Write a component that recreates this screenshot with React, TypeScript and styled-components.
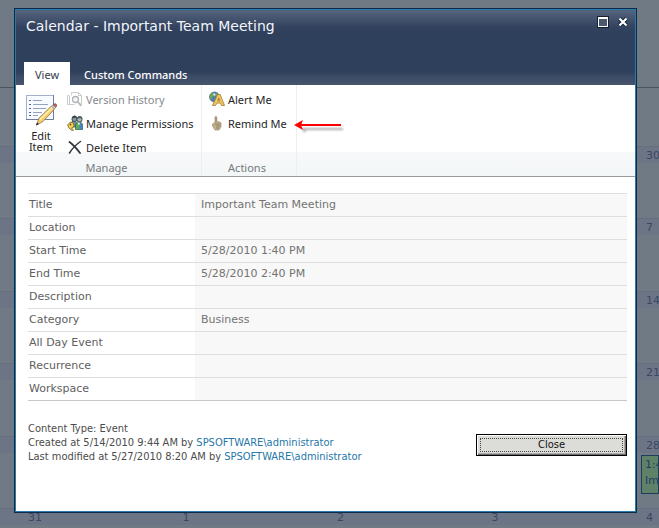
import React from "react";
import styled, { createGlobalStyle } from "styled-components";

const Global = createGlobalStyle`
  * { box-sizing: border-box; }
  body { margin: 0; background: #6e7787; }
  button { font: inherit; color: inherit; border: 0; padding: 0; background: none; cursor: pointer; }
`;

const Page = styled.div`
  position: relative;
  height: 100vh;
  overflow: hidden;
  background: #6f7a84;
  font-family: Verdana, "DejaVu Sans", sans-serif;
`;

const PageHeader = styled.div`
  height: 88px;
  border-bottom: 1px solid #46585a;
`;

const FirstWeek = styled.div`
  height: 58px;
`;

const Week = styled.div<{ $tall?: boolean }>`
  display: grid;
  grid-template-columns: 22px repeat(4, 1fr) 19px;
  height: ${(p) => (p.$tall ? 73 : 72)}px;
`;

const Day = styled.div`
  border-top: 1px solid #666e80;
  background: linear-gradient(#6c7585 16px, #6f7a85 16px);
  color: #3a4765;
  font-size: 11px;
  line-height: 18px;
  padding-left: 6px;
  overflow: hidden;
  white-space: nowrap;
`;

const EventBlock = styled.div`
  height: 39px;
  margin: 0 0 0 -5px;
  padding: 1px 0 0 3px;
  border: 1px solid #1f3c5c;
  background: #5e8168;
  color: #1f3f60;
  line-height: 16px;
`;

const Dialog = styled.section`
  position: absolute;
  inset: 8px 22px 15px 14px;
  display: flex;
  flex-direction: column;
  border: 1px solid #0b2b48;
  background: #fff;
  box-shadow: inset 0 0 0 1px #2b78ab;
  padding: 1px;
`;

const TitleArea = styled.header`
  height: 75px;
  display: flex;
  flex-direction: column;
  justify-content: space-between;
  background: linear-gradient(#55647d 0, #45556f 8px, #33435f 17px, #2f405c 24px, #2f405c 62px, #3b4b66 66px, #46546c 75px);
  color: #fff;
`;

const TitleRow = styled.div`
  display: flex;
  justify-content: space-between;
  padding: 6px 6px 0 10px;
`;

const Title = styled.h1`
  margin: 0;
  font-size: 14px;
  font-weight: 400;
  line-height: 20px;
  color: #f2f5fa;
`;

const WindowButtons = styled.div`
  display: flex;
  gap: 8px;
  height: 12px;
  button { width: 12px; height: 12px; }
  svg { display: block; }
`;

const Tabs = styled.div`
  display: flex;
  height: 23px;
  padding-left: 8px;
  font-family: "Noto Sans", sans-serif;
  font-size: 11px;
`;

const Tab = styled.button<{ $active?: boolean }>`
  padding: 2px ${(p) => (p.$active ? 11 : 14)}px 0;
  background: ${(p) => (p.$active ? "#fff" : "transparent")};
  color: ${(p) => (p.$active ? "#333b4a" : "#fff")};
  font-weight: ${(p) => (p.$active ? 400 : 500)};
`;

const Ribbon = styled.div`
  display: flex;
  height: 92px;
  border-bottom: 1px solid #979b9f;
  background: linear-gradient(#fff 67px, #f7f8fa 67px, #f3f7f7 100%);
  font-family: "Noto Sans", sans-serif;
  font-size: 11px;
  color: #262626;
`;

const Group = styled.div<{ $width: number }>`
  display: flex;
  flex-direction: column;
  justify-content: space-between;
  width: ${(p) => p.$width}px;
  border-right: 1px solid #eceef0;
`;

const GroupBody = styled.div`
  display: flex;
  flex: none;
  height: 75px;
  padding: 2px 0 0 6px;
`;

const GroupName = styled.div`
  height: 16px;
  line-height: 16px;
  padding-right: 4px;
  text-align: center;
  color: #76797d;
`;

const LargeCommand = styled.button`
  display: flex;
  flex-direction: column;
  align-items: center;
  width: 38px;
  height: 68px;
  padding-top: 7px;
  line-height: 11px;
  svg { flex: none; margin-bottom: 4px; }
`;

const CommandList = styled.div<{ $inset: number }>`
  display: flex;
  flex-direction: column;
  align-items: flex-start;
  padding-left: ${(p) => p.$inset}px;
`;

const Command = styled.button`
  display: flex;
  flex: none;
  align-items: center;
  gap: 3px;
  height: 24px;
  white-space: nowrap;
  &:disabled { color: #85888c; }
`;

const Pointer = styled.svg`
  display: block;
  margin-top: 34px;
  margin-left: -4px;
`;

const Content = styled.main`
  flex: 1;
  padding: 16px 8px 0 12px;
`;

const Fields = styled.table`
  width: 100%;
  border-collapse: collapse;
  table-layout: fixed;
  border-bottom: 1px solid #c5c7c9;
  font-size: 11px;
  color: #606060;
`;

const Label = styled.th`
  width: 167px;
  height: 23px;
  padding: 0 0 1px 1px;
  border-top: 1px solid #dcdee0;
  font-weight: 400;
  text-align: left;
`;

const Value = styled.td`
  padding: 0 0 1px 6px;
  border-top: 1px solid #dcdee0;
  background: #f8f8f8;
  color: #737373;
`;

const Footer = styled.footer`
  display: flex;
  justify-content: space-between;
  align-items: flex-start;
  padding-top: 21px;
`;

const Info = styled.div`
  font-family: Tahoma, "DejaVu Sans Condensed", "DejaVu Sans", sans-serif;
  font-size: 11px;
  line-height: 14px;
  color: #4c4c4c;
  a { color: #2676a9; text-decoration: none; }
`;

const CloseButton = styled.button`
  width: 151px;
  height: 22px;
  margin-top: 12px;
  padding: 2px;
  border: 1px solid #000;
  background: #dcdcd8;
  box-shadow: inset 1px 1px #fff, inset -1px -1px #6d6d6d, inset -2px -2px #a9a9a5;
  font-family: Tahoma, "DejaVu Sans Condensed", "DejaVu Sans", sans-serif;
  font-size: 11px;
  color: #111;
  span { display: block; margin: 0 1px; border: 1px dotted #444; line-height: 12px; }
`;

const EditIcon = () => (
  <svg width="32" height="32" viewBox="0 0 32 32">
    <rect x="1.500" y="1.500" width="27" height="24" fill="#f8fbff" stroke="#a3b0cb" />
    <path d="M1 25.500h27.500V1" fill="none" stroke="#6d7da0" />
    <path d="M4 6.500h2M4 10.500h2M4 14.500h2M4 18.500h2M4 21.500h2" stroke="#4f659a" />
    <path d="M8 6.500h9M8 10.500h15M8 14.500h13M8 18.500h9M8 21.500h5" stroke="#94a3c0" />
    <path d="M11.500 31l2.500-7L26.500 12l3 3L18 27.500z" fill="#f4cd70" stroke="#8f753f" strokeWidth=".8" />
    <path d="M15 25.500L27.500 13.500" stroke="#fff0ac" strokeWidth="1.500" />
    <path d="M28 11l1-1c1.500-1 3.500 1 2.500 2.500l-1 1z" fill="#c2665a" stroke="#80463f" strokeWidth=".8" />
    <path d="M26.500 12l3 3 1-1.500-2.500-2.500z" fill="#cbd3dc" stroke="#7b8794" strokeWidth=".6" />
    <path d="M11 31.500l1-3 2 1.500z" fill="#222" />
  </svg>
);

const HistoryIcon = () => (
  <svg width="16" height="16" viewBox="0 0 16 16" fill="none" stroke="#c9cbcd">
    <path d="M2.500 13.500h-2v-9h2M4.500 4.500v-3h7l3 3v9h-2M11.500 1.500v3h3" />
    <path d="M2.500 5v8.500h5" />
    <circle cx="8.500" cy="8.500" r="3" fill="#f4f5f6" stroke="#b0b3b5" strokeWidth="1.300" />
    <path d="M10.800 10.800l3.500 4" stroke="#b9bbbd" strokeWidth="2" />
  </svg>
);

const PermissionsIcon = () => (
  <svg width="16" height="16" viewBox="0 0 16 16">
    <path d="M4 9c0-4 6-4 6 0v3H4z" fill="#7d93b8" stroke="#34445e" strokeWidth=".7" />
    <path d="M8.500 10c0-4 7-4 7 0v4.500h-7z" fill="#58ae4e" stroke="#255f46" strokeWidth=".7" />
    <path d="M12.500 7.500l3 2v5h-3z" fill="#4c7fc8" />
    <path d="M10.500 7.500l1.500 3 1-3z" fill="#fff" />
    <circle cx="7.500" cy="4" r="2.600" fill="#8a9a9c" stroke="#26383e" strokeWidth=".8" />
    <path d="M5 3.500c0-4 5-4 5 0L8 2.500z" fill="#35444a" />
    <circle cx="12.500" cy="4.500" r="2.600" fill="#a9b5b3" stroke="#26383e" strokeWidth=".8" />
    <path d="M10 4c0-4 5.500-4 5.500 0L13 3z" fill="#4b5b5d" />
    <path d="M0.500 10l3-3 3 1 .5 2.500-1 2-1.500.5 2 2-1 1L2 13z" fill="#f5d34e" stroke="#725a1b" strokeWidth=".8" />
    <circle cx="3.500" cy="9.500" r=".9" fill="#6b5314" />
  </svg>
);

const DeleteIcon = () => (
  <svg width="16" height="16" viewBox="0 0 16 16" fill="none" stroke="#34383f" strokeLinecap="round">
    <path d="M2.500 3C6 5.500 10 10 13 14" strokeWidth="1.900" />
    <path d="M13.500 2.500C9 5.500 5 10 2.500 14" strokeWidth="1.500" />
  </svg>
);

const AlertIcon = () => (
  <svg width="16" height="16" viewBox="0 0 16 16">
    <circle cx="5.500" cy="6" r="5" fill="#4c83b5" stroke="#43698c" strokeWidth=".7" />
    <path d="M2 3c2-2 4-1 4 0L5 5 3 6 2 9C0 7 0 5 2 3zM7 2l3 1.500V7L7 9z" fill="#6fa650" />
    <path d="M4 3l1.500-.8L7 4 5 5z" fill="#d6e8f5" />
    <path d="M3.500 14.500L8.500 3.500h2.700l4.300 11h-3l-1-2.500H8l-1.500 2.500zM8.800 10h2L9.800 7z" fill="#f3c65a" stroke="#a0792f" strokeWidth=".8" fillRule="evenodd" />
  </svg>
);

const RemindIcon = () => (
  <svg width="16" height="16" viewBox="0 0 16 16">
    <path d="M6 8V2.500c0-1.500 1.800-1.500 1.800 0v4l3 .5 1.200 1V12l-2 3H6l-2.500-4V9L5 8z" fill="#c0b08a" stroke="#9b8e6c" strokeWidth=".7" />
    <path d="M6 9h5M7 11h4M7 13h3" stroke="#857a5f" strokeWidth=".8" />
    <path d="M7 2v5" stroke="#877c62" strokeWidth=".6" />
  </svg>
);

const MaximizeIcon = () => (
  <svg width="12" height="12" viewBox="0 0 12 12">
    <rect width="12" height="12" fill="#18222f" />
    <rect x="1.500" y="1.500" width="9" height="9" fill="#4a5870" stroke="#fff" />
    <path d="M1 2h10" stroke="#fff" strokeWidth="2" />
  </svg>
);

const CloseIcon = () => (
  <svg width="12" height="12" viewBox="0 0 12 12" fill="none">
    <path d="M2.500 2.500l7 7M9.500 2.500l-7 7" stroke="#172235" strokeWidth="4" />
    <path d="M2.500 2.500l7 7M9.500 2.500l-7 7" stroke="#fff" strokeWidth="2.200" />
  </svg>
);

const weeks = [
  ["", "", "", "", "30"],
  ["", "", "", "", "7"],
  ["", "", "", "", "14"],
  ["", "", "", "", "21"],
  ["", "", "", "", "28"],
  ["31", "1", "2", "3", "4"],
];

const fields = [
  ["Title", "Important Team Meeting"],
  ["Location", ""],
  ["Start Time", "5/28/2010 1:40 PM"],
  ["End Time", "5/28/2010 2:40 PM"],
  ["Description", ""],
  ["Category", "Business"],
  ["All Day Event", ""],
  ["Recurrence", ""],
  ["Workspace", ""],
];

export default function App() {
  return (
    <Page>
      <Global />
      <PageHeader />
      <FirstWeek />
      {weeks.map((days, i) => (
        <Week key={i} $tall={i % 2 === 1}>
          <Day />
          {days.map((day, j) => (
            <Day key={j}>
              {day}
              {day === "28" && <EventBlock>1:40<br />Important</EventBlock>}
            </Day>
          ))}
        </Week>
      ))}
      <Dialog role="dialog" aria-labelledby="dialog-title">
        <TitleArea>
          <TitleRow>
            <Title id="dialog-title">Calendar - Important Team Meeting</Title>
            <WindowButtons>
              <button aria-label="Maximize"><MaximizeIcon /></button>
              <button aria-label="Close dialog"><CloseIcon /></button>
            </WindowButtons>
          </TitleRow>
          <Tabs role="tablist">
            <Tab role="tab" aria-selected="true" $active>View</Tab>
            <Tab role="tab" aria-selected="false">Custom Commands</Tab>
          </Tabs>
        </TitleArea>
        <Ribbon>
          <Group $width={186}>
            <GroupBody>
              <LargeCommand><EditIcon />Edit<br />Item</LargeCommand>
              <CommandList $inset={7}>
                <Command disabled><HistoryIcon />Version History</Command>
                <Command><PermissionsIcon />Manage Permissions</Command>
                <Command><DeleteIcon />Delete Item</Command>
              </CommandList>
            </GroupBody>
            <GroupName>Manage</GroupName>
          </Group>
          <Group $width={95}>
            <GroupBody>
              <CommandList $inset={1}>
                <Command><AlertIcon />Alert Me</Command>
                <Command><RemindIcon />Remind Me</Command>
              </CommandList>
            </GroupBody>
            <GroupName>Actions</GroupName>
          </Group>
          <Pointer width="56" height="18" viewBox="0 0 56 18" aria-hidden="true">
            <defs><filter id="soft" x="0" y="0" width="56" height="18" filterUnits="userSpaceOnUse"><feGaussianBlur stdDeviation="1.200" /></filter></defs>
            <path d="M8 9l4 5 1-3h37V9H8z" fill="#aaa" filter="url(#soft)" />
            <path d="M8 6h40" stroke="#f00" strokeWidth="2" />
            <path d="M1 6l9-5-2 5 2 5z" fill="#f00" />
          </Pointer>
        </Ribbon>
        <Content>
          <Fields>
            <tbody>
              {fields.map(([label, value]) => (
                <tr key={label}>
                  <Label scope="row">{label}</Label>
                  <Value>{value}</Value>
                </tr>
              ))}
            </tbody>
          </Fields>
          <Footer>
            <Info>
              Content Type: Event<br />
              Created at 5/14/2010 9:44 AM by <a href="#admin">SPSOFTWARE\administrator</a><br />
              Last modified at 5/27/2010 8:20 AM by <a href="#admin">SPSOFTWARE\administrator</a>
            </Info>
            <CloseButton><span>Close</span></CloseButton>
          </Footer>
        </Content>
      </Dialog>
    </Page>
  );
}
